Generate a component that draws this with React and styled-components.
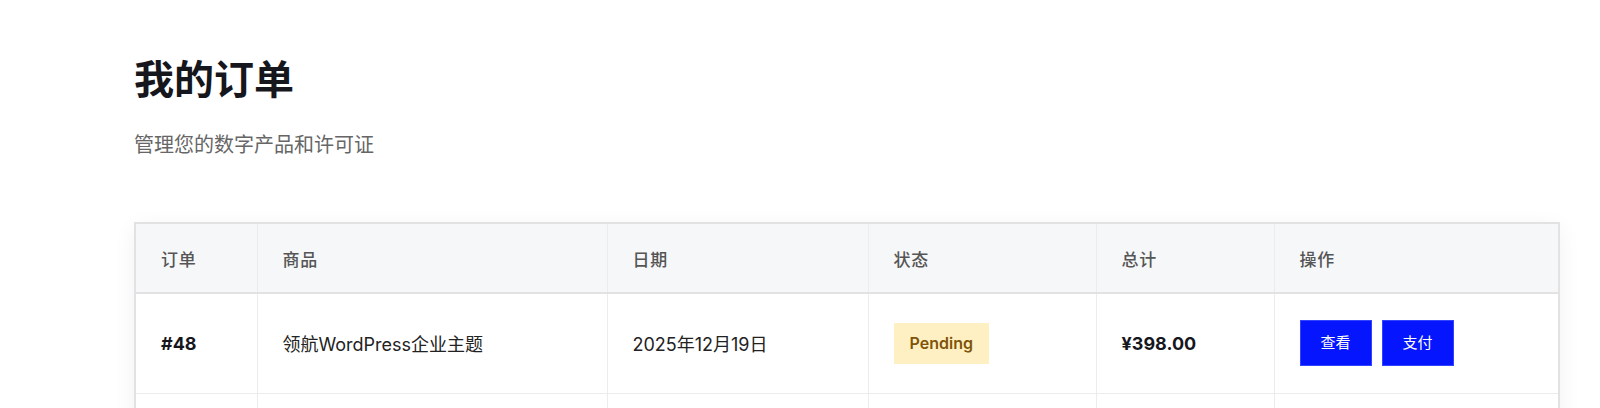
import React from 'react';
import styled, { createGlobalStyle } from 'styled-components';

const colors = {
  ink: '#16161d',
  text: '#222',
  muted: '#666',
  head: '#555',
  line: '#ececec',
  frame: '#e2e2e2',
  headBg: '#f6f7f9',
  blue: '#0516ff',
  amberBg: '#fef0c3',
  amberText: '#7f5409',
};

const GlobalStyle = createGlobalStyle`
  html, body {
    margin: 0;
    background: #fff;
    overflow: hidden;
  }
  body {
    font-family: Inter, "Noto Sans CJK SC", "Noto Sans", sans-serif;
    color: ${colors.text};
    -webkit-font-smoothing: antialiased;
  }
`;

const Page = styled.main`
  padding: 56px 0 0 134px;
`;

const Title = styled.h1`
  margin: 0;
  font-size: 40px;
  line-height: 48px;
  font-weight: 700;
  color: ${colors.ink};
`;

const Subtitle = styled.p`
  margin: 26px 0 0;
  font-size: 20px;
  line-height: 30px;
  color: ${colors.muted};
`;

const TableFrame = styled.div`
  margin-top: 62px;
  width: 1426px;
  box-sizing: border-box;
  border: 2px solid ${colors.frame};
  background: #fff;
  box-shadow: 0 6px 22px rgba(0, 0, 0, 0.06);
`;

const Table = styled.table`
  width: 100%;
  border-collapse: collapse;
  table-layout: fixed;
`;

const HeadCell = styled.th`
  height: 69px;
  padding: 0 25px;
  box-sizing: border-box;
  background: ${colors.headBg};
  border-right: 1px solid ${colors.line};
  border-bottom: 2px solid ${colors.frame};
  text-align: left;
  font-size: 17px;
  font-weight: 500;
  letter-spacing: 0.04em;
  color: ${colors.head};
  &:last-child {
    border-right: none;
  }
`;

const Cell = styled.td`
  height: 100px;
  padding: 0 25px;
  box-sizing: border-box;
  border-right: 1px solid ${colors.line};
  border-bottom: 1px solid ${colors.line};
  font-size: 18px;
  font-weight: ${(p) => (p.$strong ? 700 : 400)};
  color: ${(p) => (p.$strong ? colors.ink : colors.text)};
  &:last-child {
    border-right: none;
  }
`;

const Badge = styled.span`
  display: inline-block;
  padding: 10px 16px;
  line-height: 21px;
  font-size: 16px;
  font-weight: 600;
  background: ${colors.amberBg};
  color: ${colors.amberText};
`;

const Actions = styled.div`
  display: flex;
  gap: 10px;
`;

const ActionButton = styled.button`
  padding: 11px 20px;
  line-height: 22px;
  font-family: inherit;
  font-size: 15px;
  color: #fff;
  background: ${colors.blue};
  border: 1px solid #3344ff;
  border-radius: 0;
  cursor: pointer;
`;

const columns = [
  { key: 'id', label: '订单', width: 121 },
  { key: 'product', label: '商品', width: 350 },
  { key: 'date', label: '日期', width: 261 },
  { key: 'status', label: '状态', width: 228 },
  { key: 'total', label: '总计', width: 178 },
  { key: 'actions', label: '操作', width: 284 },
];

const orders = [
  { id: '#48', product: '领航WordPress企业主题', date: '2025年12月19日', status: 'Pending', total: '¥398.00' },
  { id: '#47', product: '领航WordPress企业主题', date: '2025年12月18日', status: 'Pending', total: '¥398.00' },
];

const App = () => (
  <>
    <GlobalStyle />
    <Page>
      <Title>我的订单</Title>
      <Subtitle>管理您的数字产品和许可证</Subtitle>
      <TableFrame>
        <Table>
          <colgroup>
            {columns.map((c) => (
              <col key={c.key} style={{ width: c.width }} />
            ))}
          </colgroup>
          <thead>
            <tr>
              {columns.map((c) => (
                <HeadCell key={c.key}>{c.label}</HeadCell>
              ))}
            </tr>
          </thead>
          <tbody>
            {orders.map((o) => (
              <tr key={o.id}>
                <Cell $strong>{o.id}</Cell>
                <Cell>{o.product}</Cell>
                <Cell>{o.date}</Cell>
                <Cell>
                  <Badge>{o.status}</Badge>
                </Cell>
                <Cell $strong>{o.total}</Cell>
                <Cell>
                  <Actions>
                    <ActionButton>查看</ActionButton>
                    <ActionButton>支付</ActionButton>
                  </Actions>
                </Cell>
              </tr>
            ))}
          </tbody>
        </Table>
      </TableFrame>
    </Page>
  </>
);

export default App;
